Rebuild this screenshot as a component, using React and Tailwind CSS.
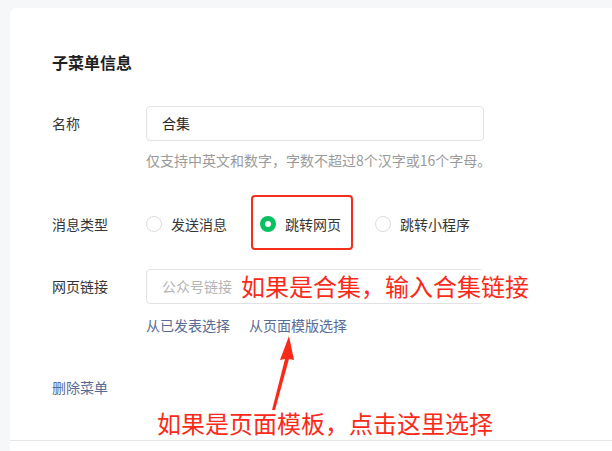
import React from 'react';

const font = { fontFamily: '"Noto Sans CJK SC", "Noto Sans", sans-serif' };

function Radio({ checked, label }) {
  return (
    <label className="flex items-center gap-[9px] text-[14px] text-[#353535]">
      {checked ? (
        <span className="flex h-[16px] w-[16px] items-center justify-center rounded-full bg-[#07c160]">
          <span className="h-[6px] w-[6px] rounded-full bg-white" />
        </span>
      ) : (
        <span className="h-[16px] w-[16px] rounded-full border border-[#dcdcdc] bg-white" />
      )}
      {label}
    </label>
  );
}

export default function App() {
  return (
    <div className="min-h-[451px] w-[612px] overflow-hidden bg-[#f6f7f8] pl-[10px] pt-[8px]" style={font}>
      <div className="relative h-[443px] rounded-tl-[6px] bg-white pl-[42px] pt-[42px]">
        {/* title */}
        <h2 className="text-[16px] font-bold leading-[24px] text-[#1f1f1f]">子菜单信息</h2>

        {/* name */}
        <div className="mt-[32px] flex items-center">
          <span className="w-[94px] text-[14px] text-[#353535]">名称</span>
          <div className="flex h-[35px] w-[338px] items-center rounded-[4px] border border-[#e2e2e2] px-[15px] text-[14px] text-[#1f1f1f]">
            合集
          </div>
        </div>
        <p className="ml-[94px] mt-[9px] text-[14px] leading-[20px] text-[#9a9a9a]">
          仅支持中英文和数字，字数不超过8个汉字或16个字母。
        </p>

        {/* message type */}
        <div className="mt-[34px] flex h-[40px] items-center">
          <span className="w-[94px] text-[14px] text-[#353535]">消息类型</span>
          <div className="flex items-center">
            <Radio label="发送消息" />
            <div className="relative ml-[33px]">
              <Radio checked label="跳转网页" />
              <div className="absolute -left-[9px] -top-[19px] h-[55px] w-[102px] rounded-[4px] border-[2px] border-[#f42d1c]" />
            </div>
            <div className="ml-[34px]">
              <Radio label="跳转小程序" />
            </div>
          </div>
        </div>

        {/* link */}
        <div className="mt-[25px] flex items-center">
          <span className="w-[94px] text-[14px] text-[#353535]">网页链接</span>
          <div className="relative">
            <div className="flex h-[35px] w-[338px] items-center rounded-[4px] border border-[#e2e2e2] px-[15px] text-[14px] text-[#b5b5b5]">
              公众号链接
            </div>
            <span className="absolute left-[95px] top-[1px] whitespace-nowrap bg-white text-[24px] leading-[32px] text-[#fb2a18]">
              如果是合集，输入合集链接
            </span>
          </div>
        </div>
        <div className="ml-[94px] mt-[11px] flex gap-[19px] text-[14px] leading-[20px] text-[#576b95]">
          <span>从已发表选择</span>
          <span>从页面模版选择</span>
        </div>

        {/* delete */}
        <p className="mt-[42px] text-[14px] leading-[20px] text-[#576b95]">删除菜单</p>

        <div className="absolute bottom-[10px] left-0 right-0 border-t border-[#e7e7e7]" />

        {/* annotation arrow */}
        <svg className="absolute left-[258px] top-[327px]" width="30" height="76" viewBox="0 0 30 76">
          <polygon points="21,1 12,25 17,24 4,75 7,75 21,24 26,25" fill="#fb2a18" />
        </svg>
        <span className="absolute left-[147px] top-[399px] whitespace-nowrap text-[24px] leading-[32px] text-[#fb2a18]">
          如果是页面模板，点击这里选择
        </span>
      </div>
    </div>
  );
}
